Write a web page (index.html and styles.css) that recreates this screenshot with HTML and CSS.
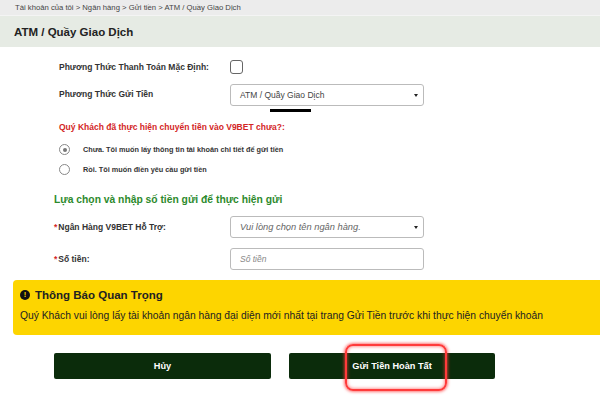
FILE: index.html
```html
<!DOCTYPE html>
<html lang="vi">
<head>
<meta charset="utf-8">
<link rel="stylesheet" href="styles.css">
</head>
<body>
<div class="crumbs">Tài khoản của tôi &gt; Ngân hàng &gt; Gửi tiền &gt; ATM / Quầy Giao Dịch</div>
<div class="title">ATM / Quầy Giao Dịch</div>
<div class="form">
  <div class="row r1">
    <div class="label">Phương Thức Thanh Toán Mặc Định:</div>
    <div class="control"><span class="checkbox"></span></div>
  </div>
  <div class="row r2">
    <div class="label">Phương Thức Gửi Tiền</div>
    <div class="control">
      <div class="select"><span>ATM / Quầy Giao Dịch</span><span class="caret"></span></div>
      <div class="redact"></div>
    </div>
  </div>
  <div class="question">Quý Khách đã thực hiện chuyển tiền vào V9BET chưa?:</div>
  <div class="radio-row"><span class="radio on"></span><span>Chưa. Tôi muốn lấy thông tin tài khoản chi tiết để gửi tiền</span></div>
  <div class="radio-row"><span class="radio"></span><span>Rồi. Tôi muốn điền yêu cầu gửi tiền</span></div>
  <div class="heading">Lựa chọn và nhập số tiền gửi để thực hiện gửi</div>
  <div class="row r3">
    <div class="label"><span class="star">*</span>Ngân Hàng V9BET Hỗ Trợ:</div>
    <div class="control"><div class="select ph"><span>Vui lòng chọn tên ngân hàng.</span><span class="caret"></span></div></div>
  </div>
  <div class="row r4">
    <div class="label"><span class="star">*</span>Số tiền:</div>
    <div class="control"><div class="input ph">Số tiền</div></div>
  </div>
</div>
<div class="notice">
  <div class="notice-title"><span class="ex">!</span>Thông Báo Quan Trọng</div>
  <div class="notice-body">Quý Khách vui lòng lấy tài khoản ngân hàng đại diện mới nhất tại trang Gửi Tiền trước khi thực hiện chuyển khoản</div>
</div>
<div class="buttons">
  <div class="btn cancel">Hủy</div>
  <div class="btn submit">Gửi Tiền Hoàn Tất<span class="highlight"></span></div>
</div>
</body>
</html>
```
FILE: styles.css
```css
* { box-sizing: border-box; }
html, body { margin: 0; padding: 0; background: #fff; }
body { width: 600px; height: 400px; overflow: hidden; font-family: "Liberation Sans", Arial, sans-serif; color: #222; }
.crumbs { height: 16px; background: #ececec; font-size: 7.7px; color: #444; padding: 3px 0 0 15px; line-height: 9px; border-bottom: 1px solid #f4f4f4; }
.title { height: 31px; background: #e6ebe4; font-size: 11.5px; font-weight: bold; color: #222; padding: 1px 0 0 14px; line-height: 31px; }
.form { padding-left: 59px; }
.row { display: grid; grid-template-columns: 171px 194px; align-items: center; }
.label { font-size: 8.5px; font-weight: bold; color: #333; }
.r1 { margin-top: 13px; height: 14px; }
.checkbox { display: block; width: 13px; height: 14px; border: 1px solid #666; border-radius: 3px; background: #fff; }
.r2 { margin-top: 10px; height: 22px; align-items: start; }
.r2 .label { line-height: 20px; }
.select, .input { height: 22px; border: 1px solid #bbb; border-radius: 3px; display: flex; align-items: center; justify-content: space-between; padding: 0 5px 0 9px; font-size: 8.5px; color: #444; background: #fff; }
.caret { width: 0; height: 0; border-left: 2.5px solid transparent; border-right: 2.5px solid transparent; border-top: 3px solid #222; }
.redact { width: 41px; height: 3px; background: #000; margin: 3px 0 0 40px; }
.question { margin-top: 16px; color: #d32626; font-size: 8.5px; font-weight: bold; }
.radio-row { display: flex; align-items: center; font-size: 7.3px; font-weight: bold; color: #333; height: 11px; }
.question + .radio-row { margin-top: 12px; }
.radio-row + .radio-row { margin-top: 9px; }
.radio { width: 11px; height: 11px; border: 1px solid #888; border-radius: 50%; margin-right: 13px; position: relative; background: #fff; }
.radio.on::after { content: ""; position: absolute; left: 2.5px; top: 2.5px; width: 4px; height: 4px; border-radius: 50%; background: #777; }
.heading { margin: 19px 0 0 -5px; color: #2d8a2d; font-size: 10.3px; font-weight: bold; }
.r3 { margin-top: 11px; height: 22px; margin-left: -5px; grid-template-columns: 176px 194px; }
.r3 .select { font-size: 9.3px; }
.r4 { margin-top: 10px; height: 22px; margin-left: -5px; grid-template-columns: 176px 194px; }
.star { color: #d32626; margin-right: 1px; }
.ph { font-style: italic; color: #666; }
.input { color: #888; justify-content: flex-start; }
.notice { margin: 10px -10px 0 13px; height: 55px; background: #fdd500; border-radius: 4px; padding: 8px 0 0 7px; color: #222; }
.notice-title { display: flex; align-items: center; font-size: 11.5px; font-weight: bold; height: 14px; }
.ex { width: 10px; height: 10px; border-radius: 50%; background: #111; color: #fdd500; font-size: 7.5px; line-height: 10px; text-align: center; margin-right: 5px; font-weight: bold; }
.notice-body { margin-top: 8px; font-size: 10.3px; }
.buttons { display: flex; gap: 18px; margin: 18px 0 0 54px; }
.btn { height: 26px; background: #0b2c0b; color: #fff; font-size: 9.2px; font-weight: bold; display: flex; align-items: center; justify-content: center; border-radius: 2px; position: relative; }
.cancel { width: 217px; }
.submit { width: 206px; }
.highlight { position: absolute; left: 56px; top: -9px; width: 102px; height: 47px; border: 2px solid #ff3b3b; border-radius: 8px; box-shadow: 0 0 3px 1px rgba(255,60,60,0.7), inset 0 0 3px 1px rgba(255,60,60,0.5); }
```
